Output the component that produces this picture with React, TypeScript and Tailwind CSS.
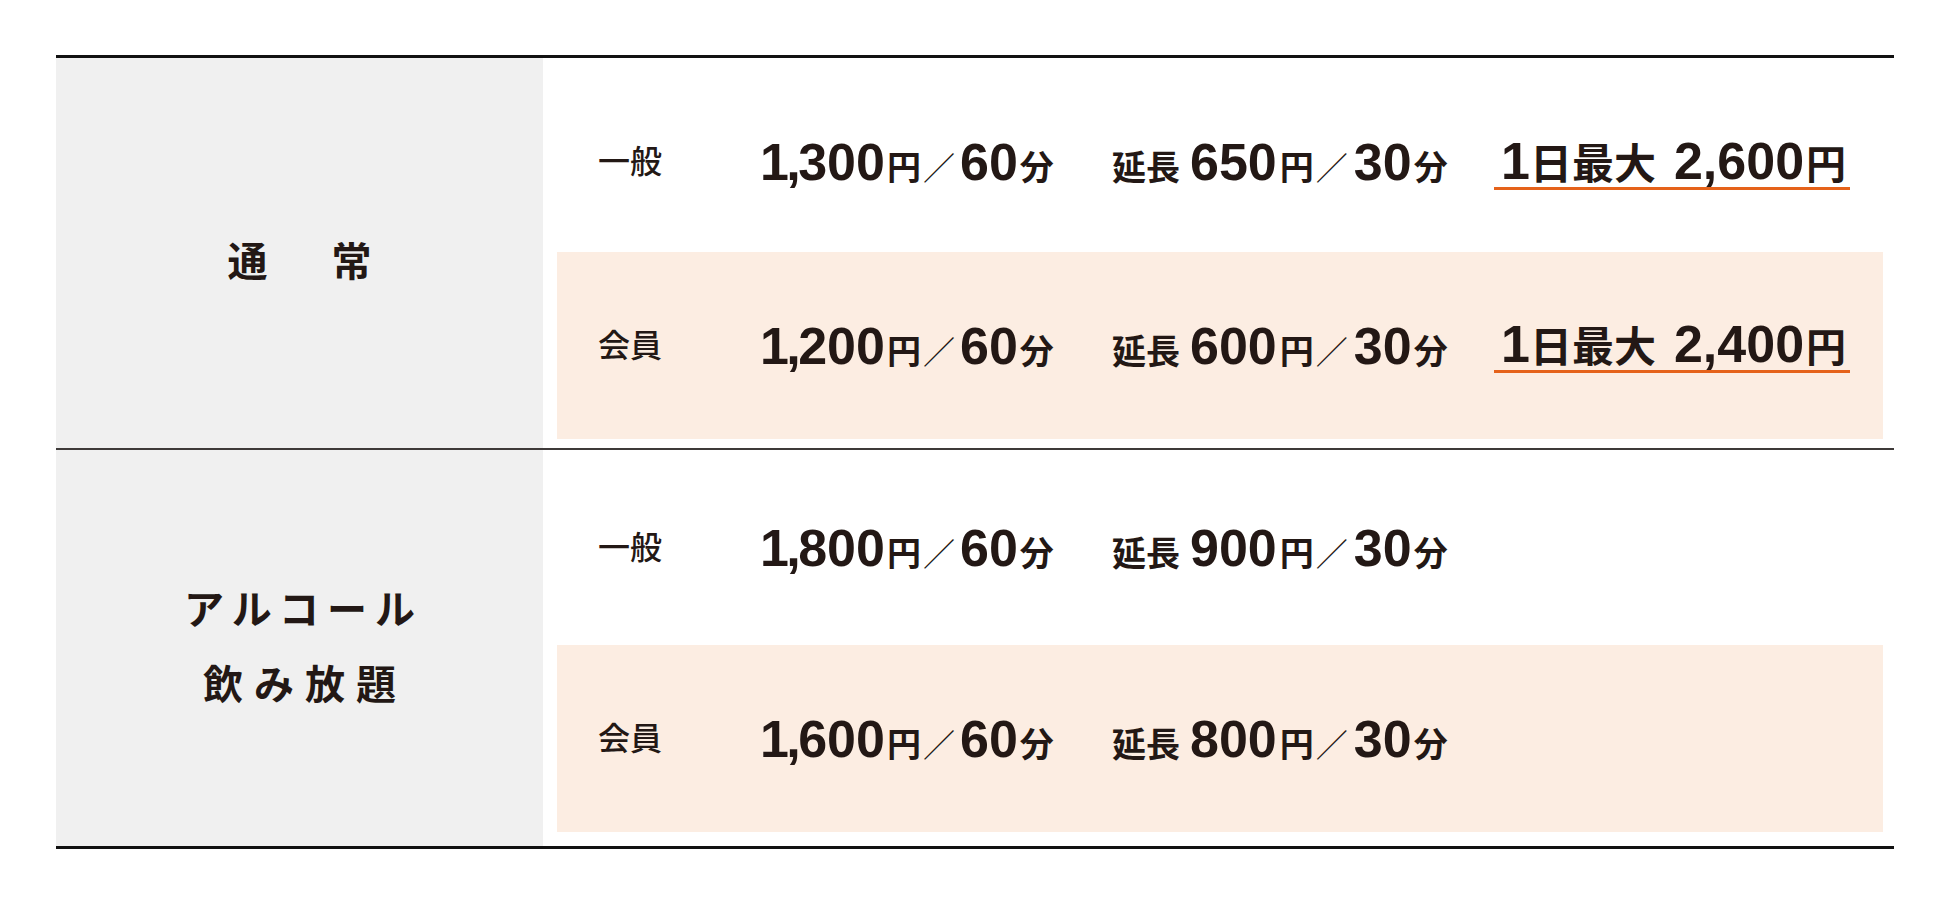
import { ReactNode } from 'react';

interface rowProps {
  label: string,
  price: string,
  ext: string,
  max?: string,
  member?: boolean,
  height: string,
}

// "1," sits tight in the original, so pull it in a little
function Num({ value }: { value: string }) {
  const [head, tail] = value.includes(',') ? value.split(',') : ['', value];
  return (
    <span className="text-[52px] font-bold">
      { head && <span className="tracking-[-0.05em]">{head},</span> }
      <span>{tail}</span>
    </span>
  );
}

function PriceRow({ label, price, ext, max, member, height }: rowProps) {
  return (
    <div className={`flex items-center pl-[41px] ${height} ${member ? 'bg-[#fcede2]' : ''}`}>
      <div className="w-[162px] text-[32px] font-medium leading-none">{label}</div>

      <div className="w-[352px] flex items-baseline leading-none">
        <Num value={price} />
        <span className="text-[34px] font-bold ml-[2px]">円</span>
        <span className="text-[32px] font-normal ml-[2px] mr-[5px]">／</span>
        <Num value="60" />
        <span className="text-[34px] font-bold ml-[2px]">分</span>
      </div>

      <div className="w-[382px] flex items-baseline leading-none">
        <span className="text-[34px] font-bold mr-[10px]">延長</span>
        <Num value={ext} />
        <span className="text-[34px] font-bold ml-[3px]">円</span>
        <span className="text-[32px] font-normal ml-[2px] mr-[6px]">／</span>
        <Num value="30" />
        <span className="text-[34px] font-bold ml-[2px]">分</span>
      </div>

      { max && (
        <div className="flex items-baseline leading-none pl-[7px] pr-[4px] border-b-[3px] border-[#e5621a]">
          <span className="text-[52px] font-bold">1</span>
          <span className="text-[42px] font-bold">日最大</span>
          <span className="text-[52px] font-bold ml-[18px]">{max}</span>
          <span className="text-[40px] font-bold ml-[2px]">円</span>
        </div>
      ) }
    </div>
  );
}

function Section({ title, children, className }: { title: ReactNode, children: ReactNode, className: string }) {
  return (
    <section className={`flex ${className}`}>
      <div className="w-[487px] bg-[#f0f0f0] flex items-center justify-center">
        {title}
      </div>
      <div className="flex-1 flex flex-col pl-[14px] pr-[11px]">
        {children}
      </div>
    </section>
  );
}

export default function App() {
  return (
    <div className="min-h-screen bg-white pt-[55px] text-[#231815] font-['Liberation_Sans','Noto_Sans_CJK_JP',sans-serif]">
      <div className="mx-[56px] border-t-[3px] border-[#111111]">
        <Section
          className="h-[392px] border-b-2 border-[#3e3a39]"
          title={
            <div className="flex gap-[64px] text-[40px] font-bold leading-none pt-[18px]">
              <span>通</span>
              <span>常</span>
            </div>
          }
        >
          <PriceRow label="一般" price="1,300" ext="650" max="2,600" height="h-[194px] pt-[14px]" />
          <PriceRow label="会員" price="1,200" ext="600" max="2,400" height="h-[187px]" member />
        </Section>

        <Section
          className="h-[399px] border-b-[3px] border-[#111111]"
          title={
            <div className="flex flex-col items-center text-[40px] font-bold leading-[75px]">
              <span className="tracking-[8px] pl-[8px]">アルコール</span>
              <span className="tracking-[11px] pl-[11px]">飲み放題</span>
            </div>
          }
        >
          <PriceRow label="一般" price="1,800" ext="900" height="h-[195px]" />
          <PriceRow label="会員" price="1,600" ext="800" height="h-[187px]" member />
        </Section>
      </div>
    </div>
  );
}
